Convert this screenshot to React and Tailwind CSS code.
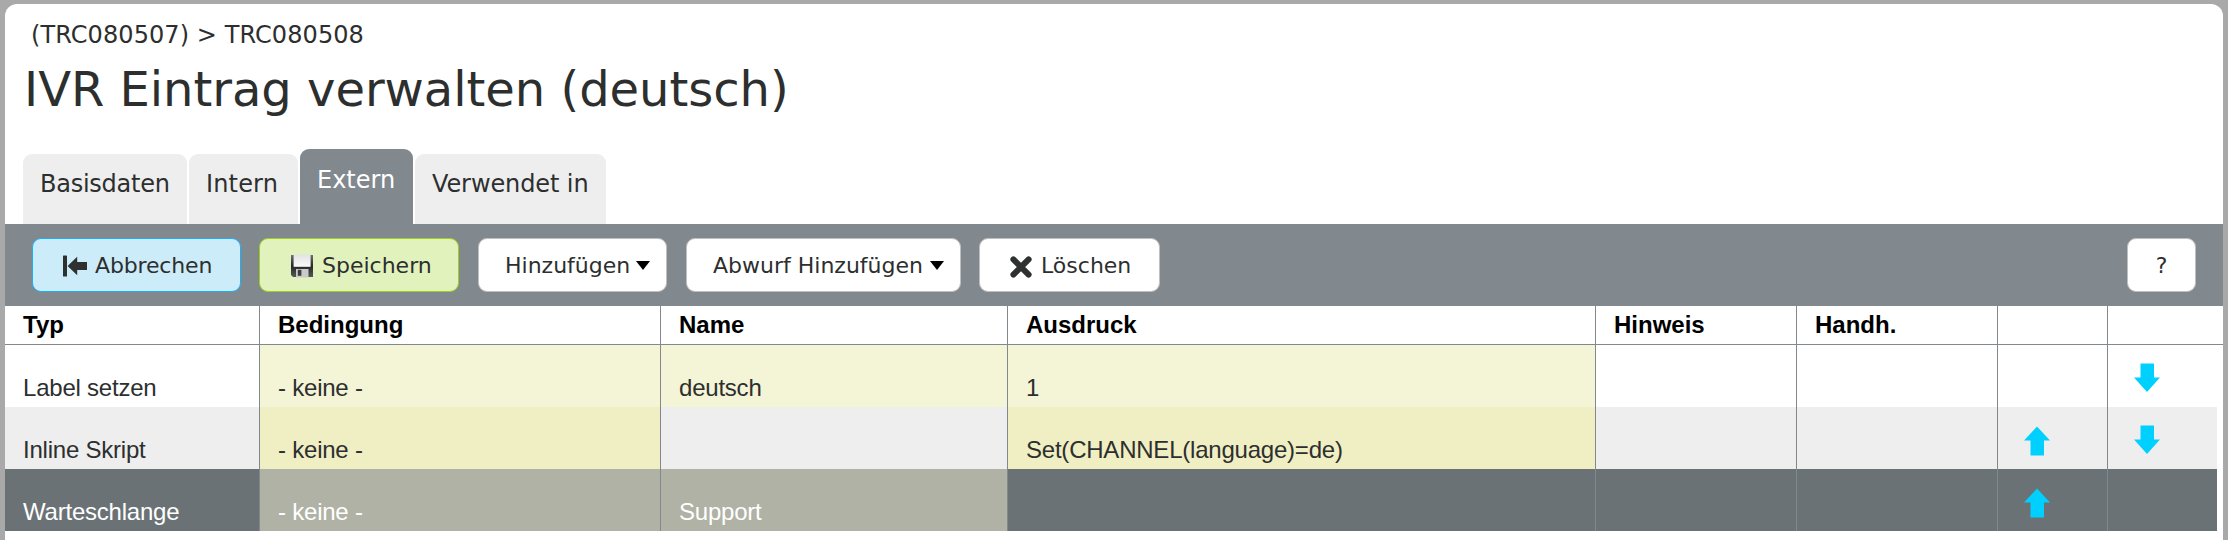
const tabs = [
  { label: "Basisdaten", box: "w-[164px] tracking-[-0.25px]" },
  { label: "Intern", box: "w-[109px] tracking-[0.15px]" },
  { label: "Extern", box: "w-[113px]", active: true },
  { label: "Verwendet in", box: "w-[191px] tracking-[-0.1px]" },
];

const headings = ["Typ", "Bedingung", "Name", "Ausdruck", "Hinweis", "Handh.", "", ""];

const columns =
  "grid grid-cols-[254px_401px_347px_588px_201px_201px_110px_110px]";

const rows = [
  { tone: "bg-white text-[#2d2f2f]", mark: "bg-[#f4f4d7]", cells: ["Label setzen", "- keine -", "deutsch", "1"], marked: [1, 2, 3], down: true },
  { tone: "bg-[#eeeeee] text-[#2d2f2f]", mark: "bg-[#f0eec3]", cells: ["Inline Skript", "- keine -", "", "Set(CHANNEL(language)=de)"], marked: [1, 3], up: true, down: true },
  { tone: "bg-[#6b7275] text-white", mark: "bg-[#afb2a5]", cells: ["Warteschlange", "- keine -", "Support", ""], marked: [1, 2], up: true },
];

function BackIcon() {
  return (
    <svg className="mt-[2px] shrink-0" width="24" height="22" viewBox="0 0 24 22" fill="#2f3131">
      <rect x="0" y="0.5" width="4" height="21" rx="0.6" />
      <path d="M4.6 11 14.2 1.8 V7 H24 V15 H14.2 V20.2 Z" />
    </svg>
  );
}

function SaveIcon() {
  return (
    <svg className="mt-[2px] shrink-0" width="24" height="24" viewBox="0 0 24 24">
      <defs>
        <linearGradient id="paper" x1="0" y1="0" x2="0" y2="1">
          <stop offset="0" stopColor="#e2e2e2" />
          <stop offset="1" stopColor="#fafafa" />
        </linearGradient>
        <linearGradient id="body" x1="0" y1="0" x2="0" y2="1">
          <stop offset="0" stopColor="#6d7170" />
          <stop offset="0.5" stopColor="#262828" />
          <stop offset="1" stopColor="#555858" />
        </linearGradient>
      </defs>
      <path d="M1 1 H23 V23 H3 L1 21 Z" fill="url(#body)" />
      <rect x="3.6" y="0.5" width="17" height="12.3" fill="url(#paper)" />
      <rect x="6" y="15" width="12.5" height="8.5" fill="#c9cbca" />
      <rect x="7.8" y="15.8" width="3.6" height="6" fill="#3c3f3e" />
    </svg>
  );
}

function DeleteIcon() {
  return (
    <svg className="mt-[3px] shrink-0" width="22" height="22" viewBox="0 0 22 22" fill="none">
      <path d="M3.4 3.4 18.6 18.6 M18.6 3.4 3.4 18.6" stroke="#2f3131" strokeWidth="6" strokeLinecap="round" />
    </svg>
  );
}

function Caret() {
  return (
    <svg className="shrink-0" width="14" height="9" viewBox="0 0 14 9">
      <path d="M0 0 H14 L7 9 Z" fill="#000" />
    </svg>
  );
}

function Arrow({ up }) {
  return (
    <svg
      className={up ? "ml-[25px] mt-[19px]" : "ml-[25px] mt-[18px]"}
      width="28"
      height="30"
      viewBox="0 0 28 30"
    >
      <path
        d={up ? "M14 0.5 27 14.5 H21 V29.5 H7.5 V14.5 H1 Z" : "M7.5 0.5 H21 V14.5 H27 L14 29 1 14.5 H7.5 Z"}
        fill="#00d0ff"
      />
    </svg>
  );
}

function Button({ className, children }) {
  return (
    <button className={`flex h-[54px] shrink-0 items-center rounded-[9px] border text-[22px] leading-[28px] whitespace-nowrap text-[#2d2f2f] ${className}`}>
      {children}
    </button>
  );
}

export default function App() {
  return (
    <div className="h-[540px] overflow-hidden bg-[#a9a9a9] pt-1 pr-[5px] pl-[5px] font-['DejaVu_Sans',sans-serif]">
      <main className="h-[536px] rounded-t-[12px] bg-white">
        <header className="flex h-[220px] flex-col text-[#2d2f2f]">
          <nav className="pt-[17px] pl-[26px] text-[24px] leading-[28px] tracking-[0.08px]">(TRC080507) &gt; TRC080508</nav>
          <h1 className="mt-[12px] pl-[19px] text-[48px] leading-[56px] tracking-[-0.03px]">IVR Eintrag verwalten (deutsch)</h1>
          <div className="mt-auto flex items-end gap-[2px] pl-[18px] text-[24px] leading-[28px]">
            {tabs.map((t) => (
              <div
                key={t.label}
                className={`rounded-t-[9px] pl-[17px] whitespace-nowrap ${t.box} ${
                  t.active ? "h-[75px] bg-[#81888e] pt-[17px] text-white" : "h-[70px] bg-[#eeeeee] pt-[16px]"
                }`}
              >
                {t.label}
              </div>
            ))}
          </div>
        </header>

        <div className="flex h-[82px] items-start bg-[#81888e] pt-[14px] pr-[27px] pl-[27px]">
          <Button className="w-[209px] border-[#1ab0f5] bg-[#cdecf9] pl-[30px]">
            <BackIcon />
            <span className="mt-[2px] ml-[8px] tracking-[-0.15px]">Abbrechen</span>
          </Button>
          <Button className="ml-[18px] w-[200px] border-[#9bd01e] bg-[#e2f2bd] pl-[30px]">
            <SaveIcon />
            <span className="mt-[2px] ml-[8px]">Speichern</span>
          </Button>
          <Button className="ml-[19px] w-[189px] border-[#bfbfbf] bg-white pl-[26px]">
            <span className="mt-[2px] mr-[6px]">Hinzufügen</span>
            <Caret />
          </Button>
          <Button className="ml-[19px] w-[275px] border-[#bfbfbf] bg-white pl-[26px]">
            <span className="mt-[2px] mr-[7px]">Abwurf Hinzufügen</span>
            <Caret />
          </Button>
          <Button className="ml-[18px] w-[181px] border-[#bfbfbf] bg-white pl-[30px]">
            <DeleteIcon />
            <span className="mt-[2px] ml-[9px]">Löschen</span>
          </Button>
          <Button className="ml-auto w-[69px] justify-center border-[#bfbfbf] bg-white">
            <span className="mt-[2px]">?</span>
          </Button>
        </div>

        <section className="font-['Liberation_Sans',Arial,sans-serif] text-[24px] leading-[28px]">
          <div className={`${columns} h-[39px] w-[2218px] border-b border-[#81888e] font-bold text-black`}>
            {headings.map((h, i) => (
              <div key={i} className={`pt-[5px] pl-[18px] ${i ? "border-l border-[#81888e]" : ""}`}>
                {h}
              </div>
            ))}
          </div>
          {rows.map((r, n) => (
            <div key={n} className={`${columns} h-[62px] w-[2212px] tracking-[-0.22px] ${r.tone}`}>
              {headings.map((_, i) => (
                <div
                  key={i}
                  className={`${i ? "border-l border-[#81888e]" : ""} ${r.marked.includes(i) ? r.mark : ""} ${
                    i < 6 ? "pt-[29px] pl-[18px] whitespace-nowrap" : ""
                  }`}
                >
                  {i < 6 && r.cells[i]}
                  {i === 6 && r.up && <Arrow up />}
                  {i === 7 && r.down && <Arrow />}
                </div>
              ))}
            </div>
          ))}
        </section>
      </main>
    </div>
  );
}
